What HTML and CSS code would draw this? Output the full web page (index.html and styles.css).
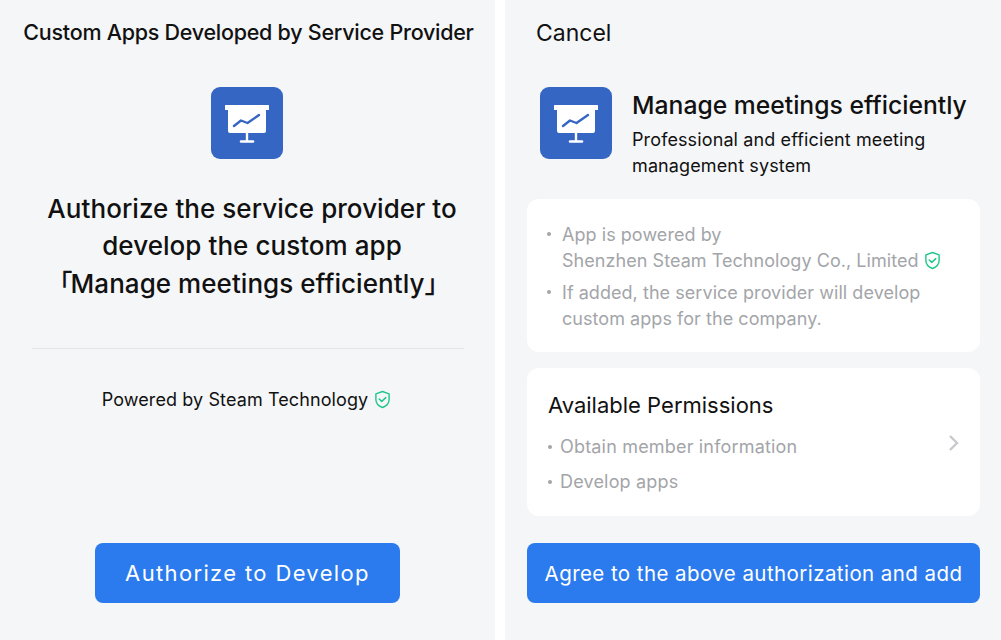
FILE: index.html
```html
<!DOCTYPE html>
<html lang="en">
<head>
<meta charset="utf-8">
<title>Custom Apps</title>
<link rel="stylesheet" href="styles.css">
</head>
<body>
<svg class="defs" width="0" height="0" aria-hidden="true">
  <symbol id="app" viewBox="0 0 72 72">
    <rect width="72" height="72" rx="9" fill="#3566c3"/>
    <rect x="14" y="18" width="44" height="5" rx="0.5" fill="#fff"/>
    <path d="M17 22h38v22a2 2 0 0 1-2 2H19a2 2 0 0 1-2-2z" fill="#fff"/>
    <path d="M34.800 45h2.400v9h-2.400z" fill="#fff"/>
    <path d="M30 54.500h12" stroke="#fff" stroke-width="2.500" stroke-linecap="round"/>
    <path d="M23 39l7-5.500 6.500 2.500L48 28" fill="none" stroke="#3566c3" stroke-width="2.400" stroke-linecap="round" stroke-linejoin="round"/>
  </symbol>
  <symbol id="shield" viewBox="0 0 18 20">
    <path d="M9 1.500l7 2.500v6c0 4-3 7-7 8.500C5 17 2 14 2 10V4z" fill="none" stroke="#1fc78a" stroke-width="1.500" stroke-linejoin="round"/>
    <path d="M5.500 9.500l2.700 2.500 4.300-4" fill="none" stroke="#1fc78a" stroke-width="1.500" stroke-linecap="round" stroke-linejoin="round"/>
  </symbol>
</svg>
<main class="screens">
  <section class="pane pane-left">
    <h1 class="top-title">Custom Apps Developed by Service Provider</h1>
    <svg class="app-icon app-icon-left"><use href="#app"/></svg>
    <h2 class="auth-title">Authorize the service provider to<br>develop the custom app<br><span class="bracket bracket-open">「</span>Manage meetings efficiently<span class="bracket bracket-close">」</span></h2>
    <hr class="divider">
    <p class="powered">Powered by Steam Technology <svg class="shield"><use href="#shield"/></svg></p>
    <button class="btn btn-left">Authorize to Develop</button>
  </section>
  <section class="pane pane-right">
    <div class="cancel">Cancel</div>
    <div class="app-head">
      <svg class="app-icon"><use href="#app"/></svg>
      <div class="app-info">
        <h2 class="app-name">Manage meetings efficiently</h2>
        <p class="app-desc">Professional and efficient meeting management system</p>
      </div>
    </div>
    <div class="card card-info">
      <ul class="bullets">
        <li>App is powered by<br>Shenzhen Steam Technology Co., Limited <svg class="shield"><use href="#shield"/></svg></li>
        <li>If added, the service provider will develop custom apps for the company.</li>
      </ul>
    </div>
    <div class="card card-perm">
      <h3 class="perm-title">Available Permissions</h3>
      <div class="perm-row">
        <ul class="perms">
          <li>Obtain member information</li>
          <li>Develop apps</li>
        </ul>
        <svg class="chevron" viewBox="0 0 12 18"><path d="M2 2l7 7-7 7" fill="none" stroke="#c8c9cc" stroke-width="2.400"/></svg>
      </div>
    </div>
    <button class="btn btn-right">Agree to the above authorization and add</button>
  </section>
</main>
</body>
</html>
```

FILE: styles.css
```css
* { box-sizing: border-box; }
html, body { margin: 0; padding: 0; height: 640px; overflow: hidden; background: #fff; }
body { font-family: Inter, "Noto Sans", "Liberation Sans", sans-serif; color: #111; }
.defs { display: block; height: 0; }
.screens { display: flex; gap: 10px; height: 640px; }
.pane { background: #f5f6f8; display: flex; flex-direction: column; height: 640px; }
.pane-left { width: 495px; align-items: center; }
.pane-right { width: 496px; padding: 0 21px 0 22px; }
.top-title { margin: 0 0 0 2px; padding-top: 17px; height: 87px; line-height: 30px; font-size: 21.500px; font-weight: 550; white-space: nowrap; letter-spacing: -0.26px; }
.app-icon { width: 72px; height: 72px; display: block; flex: none; }
.app-icon-left { margin-right: 1px; }
.auth-title { margin: 31px 0 0 9px; font-size: 26px; font-weight: 500; line-height: 37.300px; text-align: center; letter-spacing: 0.05px; }
.bracket { display: inline-block; line-height: 0; font-family: "Noto Sans CJK SC", sans-serif; font-weight: 500; }
.bracket-open { width: 24px; }
.bracket-close { width: 33px; text-align: left; }
.divider { width: 432px; height: 1px; border: 0; background: #e4e5e8; margin: 46px 0 0; }
.powered { margin: 38px 0 0; font-size: 18px; line-height: 26px; white-space: nowrap; display: flex; align-items: center; gap: 6px; letter-spacing: 0.1px; transform: translateX(-1px); }
.shield { width: 17px; height: 19px; display: inline-block; vertical-align: -3px; }
.btn { display: block; height: 60px; border: 0; border-radius: 8px; background: #2b7bee; color: #fff; font-family: inherit; white-space: nowrap; }
.btn-left { width: 305px; margin-top: 130px; font-size: 22px; letter-spacing: 1.350px; }
.btn-right { width: 453px; margin-top: 27px; font-size: 20.500px; letter-spacing: 0.43px; padding: 0; }
.cancel { padding: 18px 0 0 9px; height: 87px; font-size: 23px; line-height: 30px; }
.app-head { display: flex; gap: 20px; padding-left: 13px; height: 112px; }
.app-info { min-width: 0; width: 345px; }
.app-name { margin: 3px 0 0; font-size: 24.700px; line-height: 30px; font-weight: 500; white-space: nowrap; }
.app-desc { margin: 7px 0 0; font-size: 18px; line-height: 26px; letter-spacing: 0.12px; }
.card { background: #fff; border-radius: 12px; width: 453px; }
.card-info { height: 153px; padding: 23px 20px 0 20px; }
.card-perm { height: 148px; margin-top: 16px; padding: 22px 21px 0 21px; }
ul { list-style: none; margin: 0; padding: 0; }
.bullets { color: #a3a5a9; font-size: 18px; line-height: 26px; letter-spacing: 0.05px; }
.bullets li { position: relative; padding-left: 15px; margin-bottom: 6px; }
.bullets li::before, .perms li::before { content: ""; width: 4px; height: 4px; border-radius: 50%; background: #a3a5a9; position: absolute; left: 0; top: 10px; }
.perm-title { margin: 0; font-size: 22px; line-height: 30px; font-weight: 400; }
.perm-row { display: flex; justify-content: space-between; align-items: flex-start; margin-top: 10px; }
.perms { color: #a3a5a9; font-size: 18px; line-height: 34.500px; letter-spacing: 0.18px; }
.perms li { position: relative; padding-left: 12px; }
.perms li::before { top: 15px; }
.chevron { width: 12px; height: 18px; margin-top: 4px; margin-right: -1px; }
```
